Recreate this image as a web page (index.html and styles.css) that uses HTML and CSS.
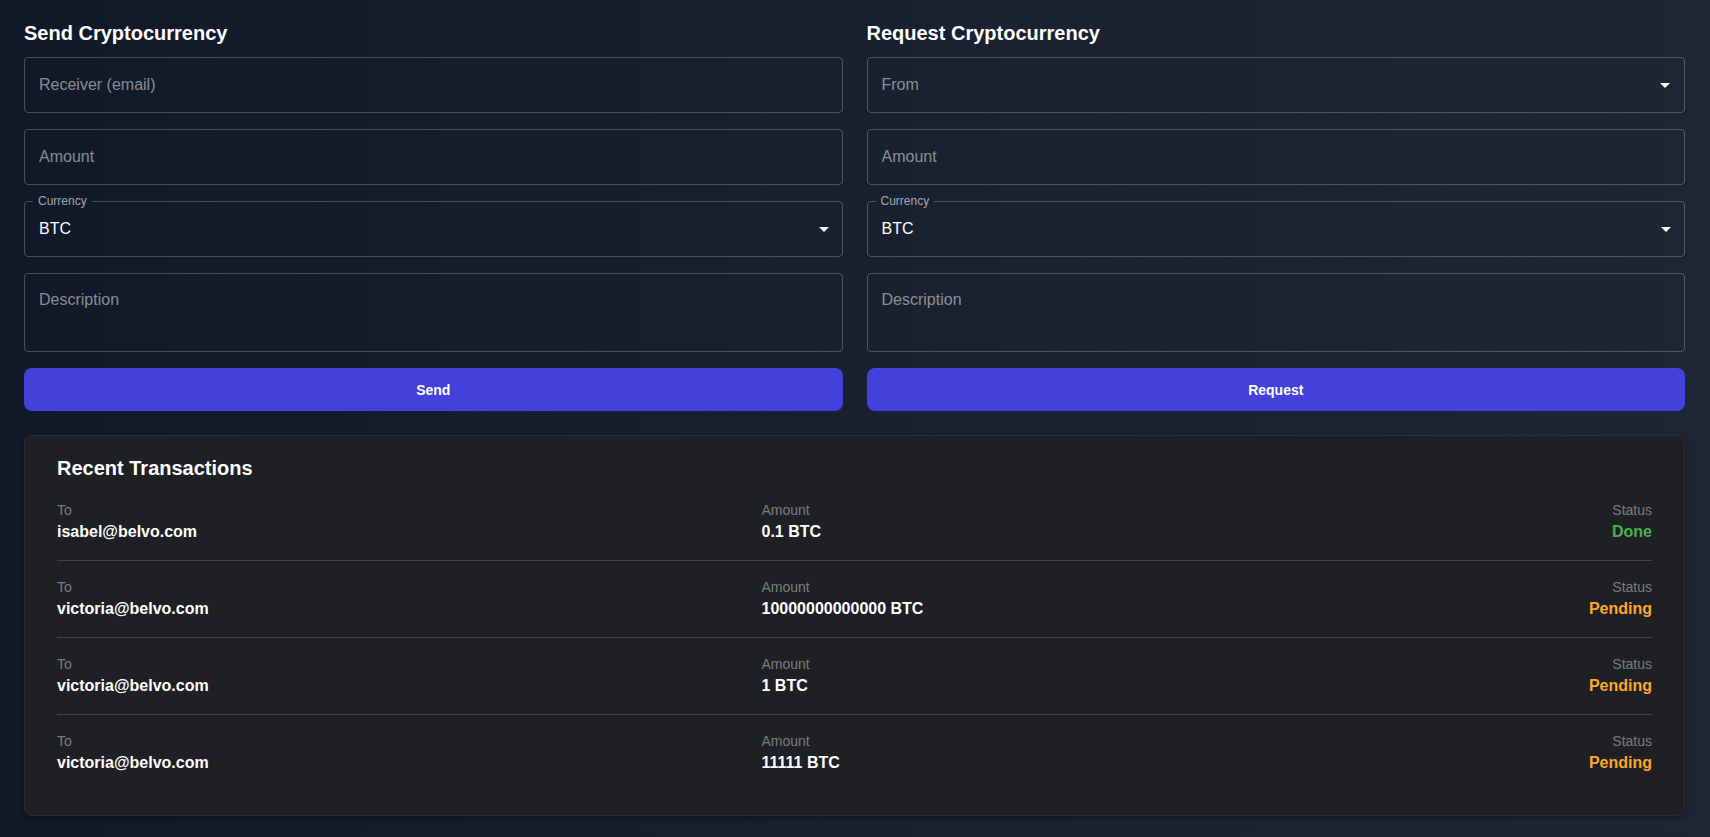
FILE: index.html
```html
<!DOCTYPE html>
<html lang="en">
<head>
<meta charset="utf-8">
<title>Crypto Transfers</title>
<link rel="stylesheet" href="styles.css">
</head>
<body>
<div class="page">
  <div class="forms">
    <section class="form">
      <h2 class="form-title">Send Cryptocurrency</h2>
      <div class="fields">
        <input class="field" type="text" placeholder="Receiver (email)">
        <input class="field" type="text" placeholder="Amount">
        <div class="select notched">
          <fieldset class="outline"><legend>Currency</legend></fieldset>
          <span class="select-value">BTC</span>
          <svg class="arrow" viewBox="0 0 24 24"><path d="M7 10l5 5 5-5z"/></svg>
        </div>
        <textarea class="field area" placeholder="Description"></textarea>
        <button class="btn" type="button">Send</button>
      </div>
    </section>
    <section class="form">
      <h2 class="form-title">Request Cryptocurrency</h2>
      <div class="fields">
        <div class="select plain">
          <span class="select-placeholder">From</span>
          <svg class="arrow" viewBox="0 0 24 24"><path d="M7 10l5 5 5-5z"/></svg>
        </div>
        <input class="field" type="text" placeholder="Amount">
        <div class="select notched">
          <fieldset class="outline"><legend>Currency</legend></fieldset>
          <span class="select-value">BTC</span>
          <svg class="arrow" viewBox="0 0 24 24"><path d="M7 10l5 5 5-5z"/></svg>
        </div>
        <textarea class="field area" placeholder="Description"></textarea>
        <button class="btn" type="button">Request</button>
      </div>
    </section>
  </div>

  <section class="card">
    <h2 class="card-title">Recent Transactions</h2>
    <div class="rows">
      <div class="row">
        <div class="cell"><div class="label">To</div><div class="value">isabel@belvo.com</div></div>
        <div class="cell"><div class="label">Amount</div><div class="value">0.1 BTC</div></div>
        <div class="cell status"><div class="label">Status</div><div class="value done">Done</div></div>
      </div>
      <div class="row">
        <div class="cell"><div class="label">To</div><div class="value">victoria@belvo.com</div></div>
        <div class="cell"><div class="label">Amount</div><div class="value">10000000000000 BTC</div></div>
        <div class="cell status"><div class="label">Status</div><div class="value pending">Pending</div></div>
      </div>
      <div class="row">
        <div class="cell"><div class="label">To</div><div class="value">victoria@belvo.com</div></div>
        <div class="cell"><div class="label">Amount</div><div class="value">1 BTC</div></div>
        <div class="cell status"><div class="label">Status</div><div class="value pending">Pending</div></div>
      </div>
      <div class="row">
        <div class="cell"><div class="label">To</div><div class="value">victoria@belvo.com</div></div>
        <div class="cell"><div class="label">Amount</div><div class="value">11111 BTC</div></div>
        <div class="cell status"><div class="label">Status</div><div class="value pending">Pending</div></div>
      </div>
    </div>
  </section>
</div>
</body>
</html>
```

FILE: styles.css
```css
html, body {
  margin: 0;
  padding: 0;
}

body {
  font-family: "Liberation Sans", Arial, Helvetica, sans-serif;
  color: #ffffff;
  background: #111827;
}

.page {
  box-sizing: border-box;
  min-height: 100vh;
  padding: 17px 25px 0 24px;
  background: linear-gradient(to right, #111827 0%, #1a2130 60%, #1e2635 100%);
}

.forms {
  display: grid;
  grid-template-columns: 1fr 1fr;
  gap: 24px;
}

.form-title {
  margin: 0 0 8px;
  font-size: 20px;
  line-height: 32px;
  font-weight: 700;
  color: #ffffff;
}

.fields {
  display: flex;
  flex-direction: column;
  gap: 16px;
}

.field {
  box-sizing: border-box;
  width: 100%;
  height: 56px;
  margin: 0;
  padding: 0 14px;
  background: transparent;
  border: 1px solid rgba(255, 255, 255, 0.23);
  border-radius: 4px;
  color: #ffffff;
  font-family: inherit;
  font-size: 16px;
  outline: none;
}

.field::placeholder {
  color: rgba(255, 255, 255, 0.5);
  opacity: 1;
}

.area {
  height: 79px;
  padding: 14px;
  line-height: 23px;
  resize: none;
  display: block;
}

.select {
  position: relative;
  box-sizing: border-box;
  height: 56px;
  display: flex;
  align-items: center;
  justify-content: space-between;
  padding: 0 7px 0 14px;
  font-size: 16px;
}

.select.plain {
  border: 1px solid rgba(255, 255, 255, 0.23);
  border-radius: 4px;
}

.select.notched {
  padding-left: 15px;
}

.outline {
  position: absolute;
  top: -5px;
  left: 0;
  right: 0;
  bottom: 0;
  margin: 0;
  padding: 0 8px;
  min-width: 0;
  border: 1px solid rgba(255, 255, 255, 0.23);
  border-radius: 4px;
  pointer-events: none;
}

.outline legend {
  padding: 0 5px;
  font-size: 12px;
  line-height: 11px;
  color: rgba(255, 255, 255, 0.62);
}

.select-value {
  color: #ffffff;
}

.select-placeholder {
  color: rgba(255, 255, 255, 0.5);
}

.arrow {
  width: 24px;
  height: 24px;
  fill: #ffffff;
  flex: none;
}

.btn {
  height: 43px;
  border: none;
  border-radius: 8px;
  background: #4440dc;
  color: #ffffff;
  font-family: inherit;
  font-size: 14px;
  font-weight: 700;
  cursor: pointer;
}

.card {
  margin-top: 24px;
  padding: 16px 32px 24px;
  background: #1e2023;
  border: 1px solid #2a2d31;
  border-radius: 8px;
  box-shadow: 0 2px 4px rgba(0, 0, 0, 0.35);
}

.card-title {
  margin: 0;
  font-size: 20px;
  line-height: 32px;
  font-weight: 700;
}

.row {
  display: grid;
  grid-template-columns: 1fr 1fr 186px;
  padding: 16px 0;
  border-bottom: 1px solid rgba(255, 255, 255, 0.17);
}

.row:last-child {
  border-bottom: none;
}

.label {
  font-size: 14px;
  line-height: 20px;
  color: rgba(255, 255, 255, 0.42);
}

.value {
  font-size: 16px;
  line-height: 24px;
  font-weight: 700;
  color: #ffffff;
}

.status {
  text-align: right;
}

.value.done {
  color: #4caf50;
}

.value.pending {
  color: #ffa726;
}
```
